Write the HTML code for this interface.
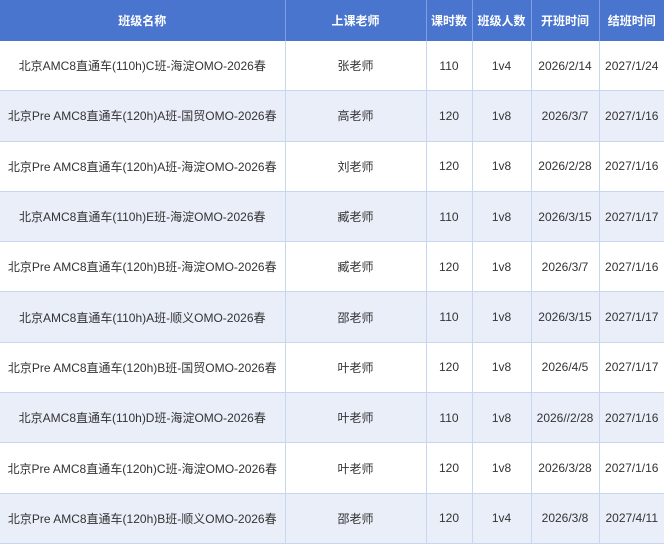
<!DOCTYPE html>
<html><head><meta charset="utf-8"><style>
body{margin:0;width:664px;height:546px;background:#fff;overflow:hidden;font-family:"Liberation Sans","Noto Sans CJK SC",sans-serif;}
table{border-collapse:collapse;table-layout:fixed;width:664px;}
th{background:#4a75cf;color:#fff;font-weight:bold;font-size:12px;height:41px;padding:0;border-right:1px solid #7f9fe0;}
td{height:49.3px;padding:0;text-align:center;font-size:12px;color:#333;border-right:1px solid #c9d6ef;border-bottom:1px solid #c9d6ef;background:#fff;}
tr:nth-child(odd) td{background:#e9eef9;}
th:last-child,td:last-child{border-right:none;}
</style></head><body>
<table>
<colgroup><col style="width:285px"><col style="width:141px"><col style="width:46px"><col style="width:59px"><col style="width:68px"><col style="width:65px"></colgroup>
<tr><th>班级名称</th><th>上课老师</th><th>课时数</th><th>班级人数</th><th>开班时间</th><th>结班时间</th></tr>
<tr><td>北京AMC8直通车(110h)C班-海淀OMO-2026春</td><td>张老师</td><td>110</td><td>1v4</td><td>2026/2/14</td><td>2027/1/24</td></tr>
<tr><td>北京Pre AMC8直通车(120h)A班-国贸OMO-2026春</td><td>高老师</td><td>120</td><td>1v8</td><td>2026/3/7</td><td>2027/1/16</td></tr>
<tr><td>北京Pre AMC8直通车(120h)A班-海淀OMO-2026春</td><td>刘老师</td><td>120</td><td>1v8</td><td>2026/2/28</td><td>2027/1/16</td></tr>
<tr><td>北京AMC8直通车(110h)E班-海淀OMO-2026春</td><td>臧老师</td><td>110</td><td>1v8</td><td>2026/3/15</td><td>2027/1/17</td></tr>
<tr><td>北京Pre AMC8直通车(120h)B班-海淀OMO-2026春</td><td>臧老师</td><td>120</td><td>1v8</td><td>2026/3/7</td><td>2027/1/16</td></tr>
<tr><td>北京AMC8直通车(110h)A班-顺义OMO-2026春</td><td>邵老师</td><td>110</td><td>1v8</td><td>2026/3/15</td><td>2027/1/17</td></tr>
<tr><td>北京Pre AMC8直通车(120h)B班-国贸OMO-2026春</td><td>叶老师</td><td>120</td><td>1v8</td><td>2026/4/5</td><td>2027/1/17</td></tr>
<tr><td>北京AMC8直通车(110h)D班-海淀OMO-2026春</td><td>叶老师</td><td>110</td><td>1v8</td><td>2026//2/28</td><td>2027/1/16</td></tr>
<tr><td>北京Pre AMC8直通车(120h)C班-海淀OMO-2026春</td><td>叶老师</td><td>120</td><td>1v8</td><td>2026/3/28</td><td>2027/1/16</td></tr>
<tr><td>北京Pre AMC8直通车(120h)B班-顺义OMO-2026春</td><td>邵老师</td><td>120</td><td>1v4</td><td>2026/3/8</td><td>2027/4/11</td></tr>
</table>
</body></html>
